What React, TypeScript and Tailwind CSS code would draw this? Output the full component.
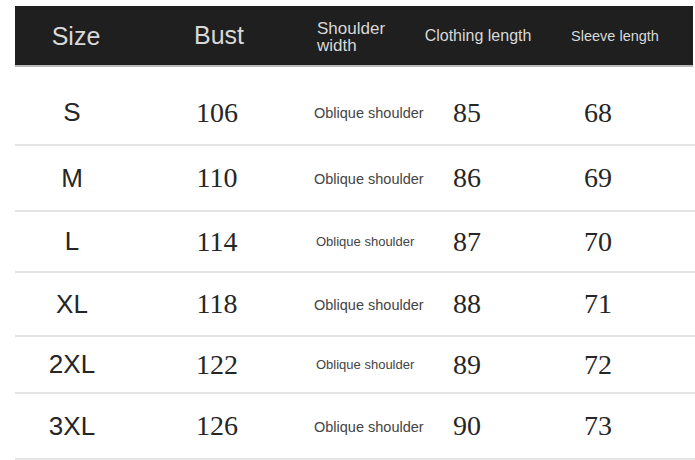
import React from "react";

const rows = [
  { size: "S", bust: "106", small: false, cl: "85", sl: "68", h: "h-[65px]" },
  { size: "M", bust: "110", small: false, cl: "86", sl: "69", h: "h-[66px]" },
  { size: "L", bust: "114", small: true, cl: "87", sl: "70", h: "h-[61px]" },
  { size: "XL", bust: "118", small: false, cl: "88", sl: "71", h: "h-[64px]" },
  { size: "2XL", bust: "122", small: true, cl: "89", sl: "72", h: "h-[57px]" },
  { size: "3XL", bust: "126", small: false, cl: "90", sl: "73", h: "h-[66px]" },
];

export default function App() {
  return (
    <div className="w-[695px] h-[460px] bg-white overflow-hidden font-['Liberation_Sans',Arial,sans-serif]">
      <div className="mt-[6px] ml-[15px] w-[678px] h-[61px] bg-[#1f1f1f] border-b-2 border-[#b8b8b8] grid grid-cols-[122px_164px_106px_142px_132px] items-center text-[#d8d8d8]">
        <div className="text-center text-[25px] pt-[3px]">Size</div>
        <div className="text-center text-[25px] pt-[1px]">Bust</div>
        <div className="pl-[16px] text-[17px] leading-[17px] pt-[2px]">
          Shoulder
          <br />
          width
        </div>
        <div className="text-center text-[16px]">Clothing length</div>
        <div className="text-center text-[14.5px] pt-[2px]">Sleeve length</div>
      </div>
      <div className="mt-[14px] ml-[15px]">
        {rows.map((r) => (
          <div
            key={r.size}
            className={`grid grid-cols-[114px_176px_128px_68px_1fr] items-center border-b-2 border-[#e4e4e4] ${r.h}`}
          >
            <div className="text-center text-[26px] text-[#262626]">{r.size}</div>
            <div className="text-center text-[28px] text-[#262626] font-['Liberation_Serif',serif]">{r.bust}</div>
            <div
              className={
                r.small
                  ? "pl-[11px] text-[13px] text-[#444] whitespace-nowrap"
                  : "pl-[9px] text-[14.5px] text-[#444] whitespace-nowrap pt-[3px]"
              }
            >
              Oblique shoulder
            </div>
            <div className="text-center text-[28px] text-[#262626] font-['Liberation_Serif',serif]">{r.cl}</div>
            <div className="text-center text-[28px] text-[#262626] font-['Liberation_Serif',serif]">{r.sl}</div>
          </div>
        ))}
      </div>
    </div>
  );
}
